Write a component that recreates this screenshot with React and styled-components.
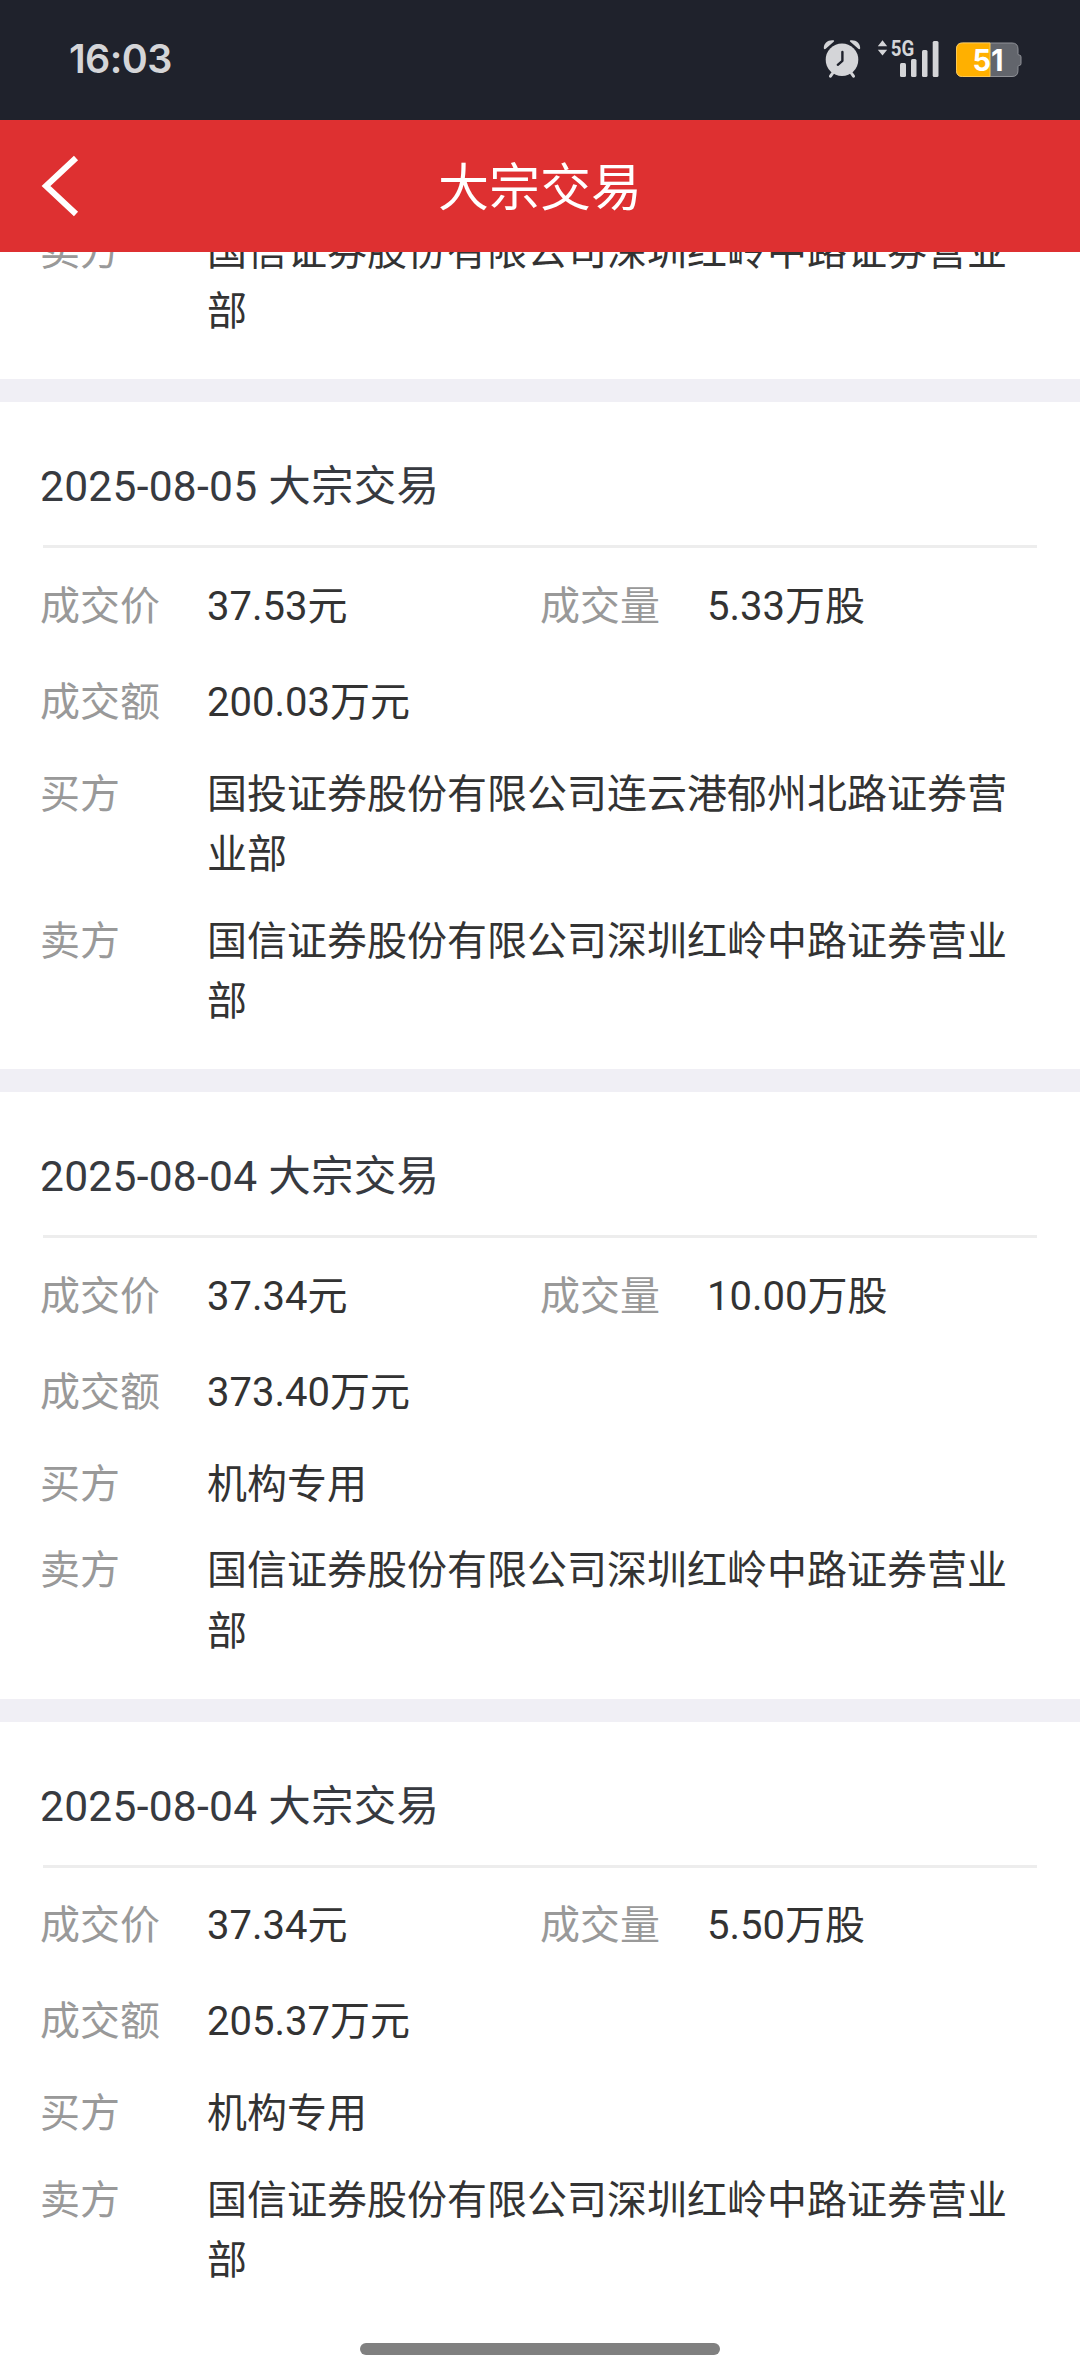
import React from 'react';
import styled, { createGlobalStyle, css } from 'styled-components';

const GlobalStyle = createGlobalStyle`
  body {
    margin: 0;
    background: #fff;
    font-family: Roboto, 'Noto Sans CJK SC', sans-serif;
  }
`;

const Screen = styled.div`
  box-sizing: border-box;
  display: flex;
  flex-direction: column;
  width: 1080px;
  height: 2376px;
  overflow: hidden;
  background: #fff;
`;

const StatusBar = styled.div`
  box-sizing: border-box;
  display: flex;
  flex: none;
  align-items: center;
  justify-content: space-between;
  height: 120px;
  padding: 0 58px 3px 69px;
  background: #1f222c;
`;

const Clock = styled.div`
  color: #d4d5d8;
  font-family: Inter, sans-serif;
  font-size: 39.5px;
  font-weight: 600;
  letter-spacing: -0.6px;
`;

const StatusIcons = styled.div`
  display: flex;
  align-items: center;
  height: 40px;

  svg {
    display: block;
    overflow: visible;
  }
`;

const Header = styled.header`
  display: grid;
  flex: none;
  grid-template-columns: 120px 1fr 120px;
  align-items: center;
  height: 132px;
  background: #de3031;
`;

const BackButton = styled.button`
  display: flex;
  margin: 0;
  padding: 0 0 0 40px;
  border: 0;
  background: none;
`;

const PageTitle = styled.h1`
  margin: 0;
  padding-top: 6px;
  color: #fff;
  font-size: 51px;
  font-weight: 400;
  line-height: 70px;
  text-align: center;
`;

const Content = styled.main`
  display: flex;
  flex: 1;
  flex-direction: column;
  min-height: 0;
  overflow: hidden;
`;

const Card = styled.section`
  box-sizing: border-box;
  display: flex;
  flex: none;
  flex-direction: column;
  padding-bottom: 23.5px;
  background: #fff;

  & + & {
    border-top: 23px solid #f0eff5;
  }

  ${props =>
    props.$scrolled &&
    css`
      justify-content: flex-end;
      height: 127px;
      overflow: hidden;
    `};
`;

const CardTitle = styled.h2`
  box-sizing: border-box;
  height: 146px;
  margin: 0 43px 10.5px;
  padding-top: 55px;
  border-bottom: 3px solid #ededed;
  color: #373a40;
  font-size: 42.5px;
  font-weight: 400;
  letter-spacing: 0.28px;
  line-height: 60px;
  text-indent: -3px;
  white-space: pre;
`;

const Row = styled.div`
  display: flex;
  flex: none;
  padding: 0 40px;
  font-size: 40px;
  line-height: 96px;
`;

const PartyRow = styled(Row)`
  padding: 13px 40px;
  line-height: 60.5px;

  ${Row} + & {
    margin-top: 1px;
  }

  & + & {
    margin-top: 0;
  }
`;

const Field = styled.div`
  display: flex;
  width: 500px;
`;

const Label = styled.div`
  flex: none;
  width: 167px;
  color: #999;
`;

const Value = styled.div`
  flex: none;
  color: #333;
`;

const PartyName = styled(Value)`
  width: 810px;
`;

const HomeIndicator = styled.div`
  flex: none;
  align-self: center;
  width: 360px;
  height: 12px;
  margin-bottom: 21px;
  border-radius: 6px;
  background: #808080;
`;

const AlarmIcon = () => (
  <svg width="38" height="40" viewBox="0 0 38 40">
    <g fill="#d4d5d8">
      <path d="M0.8 9.3C0.6 4 5 0.6 10.4 1.2c.9.2 1 1 .3 1.6L3 9.6c-.9.8-2 .7-2.2-.3z" />
      <path d="M37.2 9.3C37.4 4 33 .6 27.6 1.2c-.9.2-1 1-.3 1.6l7.7 6.8c.9.8 2 .7 2.2-.3z" />
      <circle cx="19" cy="20.8" r="16.3" />
    </g>
    <path
      d="M10.500 33l-3 4.200M27.500 33l3 4.200"
      stroke="#d4d5d8"
      strokeWidth="3"
      strokeLinecap="round"
    />
    <path
      d="M19.400 13v8.800l-4.600 4"
      fill="none"
      stroke="#1f222c"
      strokeWidth="2.4"
      strokeLinecap="round"
      strokeLinejoin="round"
    />
  </svg>
);

const SignalIcon = () => (
  <svg width="63" height="40" viewBox="0 0 63 40" fill="#d4d5d8">
    <path d="M.8 7.2L5.500 1.300l4.700 5.900zM.8 10.800h9.400l-4.700 5.600z" />
    <text
      x="13.8"
      y="17"
      fontFamily="Roboto, sans-serif"
      fontSize="21.5"
      fontWeight="700"
      textLength="23.5"
      lengthAdjust="spacingAndGlyphs"
    >
      5G
    </text>
    <rect x="23" y="24" width="6" height="14" rx="1.5" />
    <rect x="34" y="20" width="5.5" height="18" rx="1.5" />
    <rect x="45" y="11" width="5.5" height="27" rx="1.5" />
    <rect x="55.7" y="2" width="5.8" height="36" rx="1.5" />
  </svg>
);

const BatteryIcon = () => (
  <svg width="67" height="40" viewBox="0 0 67 40">
    <path
      d="M7.500 4h49.500q6 0 6 6v4.800q0 1.200 1.200 1.200 1.800 0 1.800 2v6.500q0 2-1.800 2-1.200 0-1.200 1.200v3.800q0 6-6 6H7.500q-6 0-6-6v-21.500q0-6 6-6z"
      fill="#62656c"
      stroke="#8f9197"
    />
    <path d="M35 4v33.500H7.500q-6 0-6-6v-21.500q0-6 6-6z" fill="#ffb000" stroke="#ffc84f" />
    <text
      x="33"
      y="32"
      fill="#fff"
      fontFamily="Inter, sans-serif"
      fontSize="30"
      fontWeight="700"
      textAnchor="middle"
      textLength="31"
      lengthAdjust="spacingAndGlyphs"
    >
      51
    </text>
  </svg>
);

const IconGap = styled.span`
  width: ${props => props.$size}px;
`;

const BackIcon = () => (
  <svg width="40" height="64" viewBox="0 0 40 64">
    <path d="M36 4L6 32l30 28" fill="none" stroke="#fff" strokeWidth="6" />
  </svg>
);

const seller = '国信证券股份有限公司深圳红岭中路证券营业部';

const trades = [
  {
    date: '2025-08-05',
    price: '37.53元',
    volume: '5.33万股',
    amount: '200.03万元',
    buyer: '国投证券股份有限公司连云港郁州北路证券营业部'
  },
  {
    date: '2025-08-04',
    price: '37.34元',
    volume: '10.00万股',
    amount: '373.40万元',
    buyer: '机构专用'
  },
  {
    date: '2025-08-04',
    price: '37.34元',
    volume: '5.50万股',
    amount: '205.37万元',
    buyer: '机构专用'
  }
];

const Party = ({ label, name }) => (
  <PartyRow>
    <Label>{label}</Label>
    <PartyName>{name}</PartyName>
  </PartyRow>
);

const Trade = ({ trade }) => (
  <Card>
    <CardTitle>{trade.date} 大宗交易</CardTitle>
    <Row>
      <Field>
        <Label>成交价</Label>
        <Value>{trade.price}</Value>
      </Field>
      <Field>
        <Label>成交量</Label>
        <Value>{trade.volume}</Value>
      </Field>
    </Row>
    <Row>
      <Field>
        <Label>成交额</Label>
        <Value>{trade.amount}</Value>
      </Field>
    </Row>
    <Party label="买方" name={trade.buyer} />
    <Party label="卖方" name={seller} />
  </Card>
);

const App = () => {
  return (
    <>
      <GlobalStyle />
      <Screen>
        <StatusBar>
          <Clock>16:03</Clock>
          <StatusIcons>
            <AlarmIcon />
            <IconGap $size={16} />
            <SignalIcon />
            <IconGap $size={15} />
            <BatteryIcon />
          </StatusIcons>
        </StatusBar>
        <Header>
          <BackButton aria-label="返回">
            <BackIcon />
          </BackButton>
          <PageTitle>大宗交易</PageTitle>
        </Header>
        <Content>
          {/* tail of the card scrolled under the header */}
          <Card $scrolled>
            <Party label="卖方" name={seller} />
          </Card>
          {trades.map((trade, i) => (
            <Trade key={i} trade={trade} />
          ))}
        </Content>
        <HomeIndicator />
      </Screen>
    </>
  );
};

export default App;
